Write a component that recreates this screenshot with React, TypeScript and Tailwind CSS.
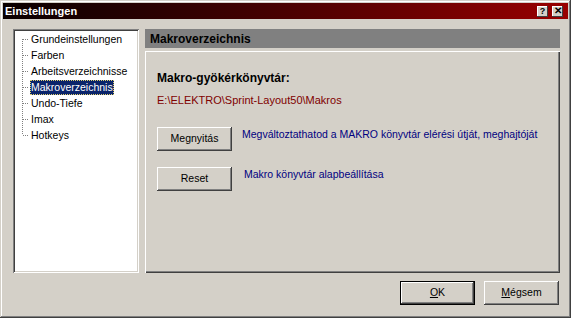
import React from 'react'

const FONT = { fontFamily: '"Liberation Sans", Arial, sans-serif' }

const items = ['Grundeinstellungen', 'Farben', 'Arbeitsverzeichnisse', 'Makroverzeichnis', 'Undo-Tiefe', 'Imax', 'Hotkeys']

function TreeLines({ first, last }: { first: boolean; last: boolean }) {
  // dotted connector: vertical at x=7, horizontal stub to x=14
  return (
    <svg width="15" height="16" className="flex-shrink-0" shapeRendering="crispEdges">
      <line x1="7.5" y1={first ? 8 : 0} x2="7.5" y2={last ? 8 : 16} stroke="#808080" strokeDasharray="1 1" />
      <line x1="8" y1="8.5" x2="14" y2="8.5" stroke="#808080" strokeDasharray="1 1" />
    </svg>
  )
}

function WinButton({ children, isDefault, className = '' }: { children: React.ReactNode; isDefault?: boolean; className?: string }) {
  return (
    <div className={`${isDefault ? 'border border-black' : ''} ${className}`}>
      <div className="w-full h-full flex items-center justify-center bg-[#d4d0c8] text-[10.5px] text-black shadow-[inset_-1px_-1px_#404040,inset_1px_1px_#ffffff,inset_-2px_-2px_#808080]">
        {children}
      </div>
    </div>
  )
}

export default function App() {
  return (
    <div
      className="w-[571px] h-[318px] bg-[#d4d0c8] p-[3px] flex flex-col shadow-[inset_-1px_-1px_#404040,inset_1px_1px_#d4d0c8,inset_-2px_-2px_#808080,inset_2px_2px_#ffffff]"
      style={FONT}
    >
      {/* title bar */}
      <div className="h-[16px] flex items-center justify-between bg-gradient-to-r from-[#0a0000] via-[#4a0000] to-[#990000] pl-[2px] pr-[5px]">
        <span className="text-white font-bold text-[11px] leading-none">Einstellungen</span>
        <div className="flex gap-[4px]">
          <div className="w-[11px] h-[11px] bg-[#d4d0c8] flex items-center justify-center text-[9px] font-bold leading-none text-black shadow-[inset_-1px_-1px_#404040,inset_1px_1px_#ffffff]">?</div>
          <div className="w-[11px] h-[11px] bg-[#d4d0c8] flex items-center justify-center text-[10px] font-bold leading-none text-black shadow-[inset_-1px_-1px_#404040,inset_1px_1px_#ffffff]">✕</div>
        </div>
      </div>

      {/* body */}
      <div className="flex gap-[6px] pt-[10px] pl-[10px]">
        {/* tree */}
        <div className="w-[126px] h-[244px] bg-white p-[2px] shadow-[inset_1px_1px_#808080,inset_-1px_-1px_#ffffff,inset_2px_2px_#404040,inset_-2px_-2px_#d4d0c8]">
          {items.map((name, i) => (
            <div key={name} className="flex items-center h-[16px]">
              <TreeLines first={i === 0} last={i === items.length - 1} />
              <span
                className={`text-[10.5px] leading-[15px] px-[1px] ${name === 'Makroverzeichnis' ? 'bg-[#0a246a] text-white outline outline-1 outline-dotted outline-[#e0d070] -outline-offset-1' : 'text-black'}`}
              >
                {name}
              </span>
            </div>
          ))}
        </div>

        {/* right side */}
        <div className="w-[415px] flex flex-col gap-[3px]">
          <div className="h-[19px] bg-[#808080] flex items-center pl-[5px]">
            <span className="font-bold text-[12px] text-black">Makroverzeichnis</span>
          </div>
          <div className="h-[222px] shadow-[inset_1px_1px_#ffffff,inset_-1px_-1px_#404040,inset_-2px_-2px_#808080] pl-[12px] pt-[20px]">
            <div className="font-bold text-[12px] text-black leading-[14px]">Makro-gyökérkönyvtár:</div>
            <div className="text-[11px] text-[#800000] mt-[8px] leading-[14px]">E:\ELEKTRO\Sprint-Layout50\Makros</div>

            <div className="flex items-start gap-[10px] mt-[20px]">
              <WinButton className="w-[75px] h-[24px]">Megnyitás</WinButton>
              <span className="text-[10.5px] text-[#000080] leading-[14px]">Megváltoztathatod a MAKRO könyvtár elérési útját, meghajtóját</span>
            </div>
            <div className="flex items-start gap-[12px] mt-[16px]">
              <WinButton className="w-[75px] h-[24px]">Reset</WinButton>
              <span className="text-[10.5px] text-[#000080] leading-[14px]">Makro könyvtár alapbeállítása</span>
            </div>
          </div>
        </div>
      </div>

      {/* footer buttons */}
      <div className="flex justify-end gap-[9px] pt-[8px] pr-[9px]">
        <WinButton isDefault className="w-[75px] h-[24px]"><span><u>O</u>K</span></WinButton>
        <WinButton className="w-[75px] h-[24px]"><span><u>M</u>égsem</span></WinButton>
      </div>
    </div>
  )
}
